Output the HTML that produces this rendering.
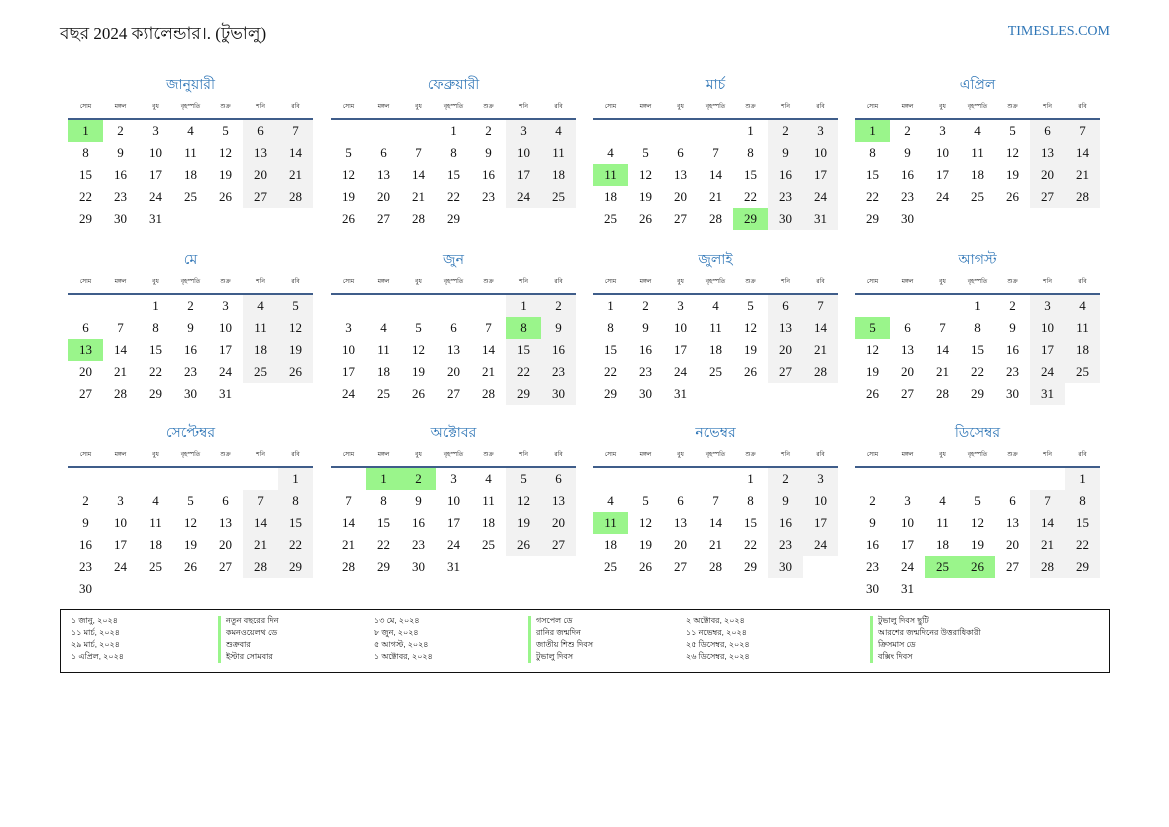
<!DOCTYPE html>
<html><head><meta charset="utf-8"><style>
*{margin:0;padding:0;box-sizing:border-box}
body{width:1169px;height:827px;background:#fff;position:relative;font-family:"Liberation Serif",serif;color:#111;overflow:hidden}
.t{position:absolute;left:60px;top:21px;font-size:17px}
.s{position:absolute;right:59px;top:24px;font-size:14px;color:#2e75b6}
.m{position:absolute;width:245px}
.m h3{font-weight:normal;color:#2e75b6;font-size:14px;text-align:center;height:23px;line-height:26px}
.m .wd{display:flex;height:24px;border-bottom:2px solid #3f5d8a;font-size:6px;align-items:flex-end;padding-bottom:6px}
.m .wd span{width:35px;text-align:center}
table{border-collapse:collapse;table-layout:fixed}
td{width:35px;height:22px;text-align:center;font-size:13px;padding:0;vertical-align:middle}
td:nth-child(n+6):not(:empty){background:#f2f2f2}
td.h{background:#9af58b!important}
.lg{position:absolute;left:60px;top:609px;width:1050px;height:64px;border:1.5px solid #111;font-size:8px;font-family:"Liberation Sans",sans-serif}
.lc{position:absolute;top:5px;line-height:12px}
.lb{position:absolute;top:6px;width:3px;height:47px;background:#9af58b}
</style></head><body>
<div class="t">বছর 2024 ক্যালেন্ডার।. (টুভালু)</div>
<div class="s">TIMESLES.COM</div>

<div class="m" style="left:68px;top:73px"><h3>জানুয়ারী</h3><div class="wd"><span>সোম</span><span>মঙ্গল</span><span>বুধ</span><span>বৃহস্পতি</span><span>শুক্র</span><span>শনি</span><span>রবি</span></div>
<table><tr><td class="h">1</td><td>2</td><td>3</td><td>4</td><td>5</td><td>6</td><td>7</td></tr><tr><td>8</td><td>9</td><td>10</td><td>11</td><td>12</td><td>13</td><td>14</td></tr><tr><td>15</td><td>16</td><td>17</td><td>18</td><td>19</td><td>20</td><td>21</td></tr><tr><td>22</td><td>23</td><td>24</td><td>25</td><td>26</td><td>27</td><td>28</td></tr><tr><td>29</td><td>30</td><td>31</td><td></td><td></td><td></td><td></td></tr></table></div>

<div class="m" style="left:331px;top:73px"><h3>ফেব্রুয়ারী</h3><div class="wd"><span>সোম</span><span>মঙ্গল</span><span>বুধ</span><span>বৃহস্পতি</span><span>শুক্র</span><span>শনি</span><span>রবি</span></div>
<table><tr><td></td><td></td><td></td><td>1</td><td>2</td><td>3</td><td>4</td></tr><tr><td>5</td><td>6</td><td>7</td><td>8</td><td>9</td><td>10</td><td>11</td></tr><tr><td>12</td><td>13</td><td>14</td><td>15</td><td>16</td><td>17</td><td>18</td></tr><tr><td>19</td><td>20</td><td>21</td><td>22</td><td>23</td><td>24</td><td>25</td></tr><tr><td>26</td><td>27</td><td>28</td><td>29</td><td></td><td></td><td></td></tr></table></div>

<div class="m" style="left:593px;top:73px"><h3>মার্চ</h3><div class="wd"><span>সোম</span><span>মঙ্গল</span><span>বুধ</span><span>বৃহস্পতি</span><span>শুক্র</span><span>শনি</span><span>রবি</span></div>
<table><tr><td></td><td></td><td></td><td></td><td>1</td><td>2</td><td>3</td></tr><tr><td>4</td><td>5</td><td>6</td><td>7</td><td>8</td><td>9</td><td>10</td></tr><tr><td class="h">11</td><td>12</td><td>13</td><td>14</td><td>15</td><td>16</td><td>17</td></tr><tr><td>18</td><td>19</td><td>20</td><td>21</td><td>22</td><td>23</td><td>24</td></tr><tr><td>25</td><td>26</td><td>27</td><td>28</td><td class="h">29</td><td>30</td><td>31</td></tr></table></div>

<div class="m" style="left:855px;top:73px"><h3>এপ্রিল</h3><div class="wd"><span>সোম</span><span>মঙ্গল</span><span>বুধ</span><span>বৃহস্পতি</span><span>শুক্র</span><span>শনি</span><span>রবি</span></div>
<table><tr><td class="h">1</td><td>2</td><td>3</td><td>4</td><td>5</td><td>6</td><td>7</td></tr><tr><td>8</td><td>9</td><td>10</td><td>11</td><td>12</td><td>13</td><td>14</td></tr><tr><td>15</td><td>16</td><td>17</td><td>18</td><td>19</td><td>20</td><td>21</td></tr><tr><td>22</td><td>23</td><td>24</td><td>25</td><td>26</td><td>27</td><td>28</td></tr><tr><td>29</td><td>30</td><td></td><td></td><td></td><td></td><td></td></tr></table></div>

<div class="m" style="left:68px;top:248px"><h3>মে</h3><div class="wd"><span>সোম</span><span>মঙ্গল</span><span>বুধ</span><span>বৃহস্পতি</span><span>শুক্র</span><span>শনি</span><span>রবি</span></div>
<table><tr><td></td><td></td><td>1</td><td>2</td><td>3</td><td>4</td><td>5</td></tr><tr><td>6</td><td>7</td><td>8</td><td>9</td><td>10</td><td>11</td><td>12</td></tr><tr><td class="h">13</td><td>14</td><td>15</td><td>16</td><td>17</td><td>18</td><td>19</td></tr><tr><td>20</td><td>21</td><td>22</td><td>23</td><td>24</td><td>25</td><td>26</td></tr><tr><td>27</td><td>28</td><td>29</td><td>30</td><td>31</td><td></td><td></td></tr></table></div>

<div class="m" style="left:331px;top:248px"><h3>জুন</h3><div class="wd"><span>সোম</span><span>মঙ্গল</span><span>বুধ</span><span>বৃহস্পতি</span><span>শুক্র</span><span>শনি</span><span>রবি</span></div>
<table><tr><td></td><td></td><td></td><td></td><td></td><td>1</td><td>2</td></tr><tr><td>3</td><td>4</td><td>5</td><td>6</td><td>7</td><td class="h">8</td><td>9</td></tr><tr><td>10</td><td>11</td><td>12</td><td>13</td><td>14</td><td>15</td><td>16</td></tr><tr><td>17</td><td>18</td><td>19</td><td>20</td><td>21</td><td>22</td><td>23</td></tr><tr><td>24</td><td>25</td><td>26</td><td>27</td><td>28</td><td>29</td><td>30</td></tr></table></div>

<div class="m" style="left:593px;top:248px"><h3>জুলাই</h3><div class="wd"><span>সোম</span><span>মঙ্গল</span><span>বুধ</span><span>বৃহস্পতি</span><span>শুক্র</span><span>শনি</span><span>রবি</span></div>
<table><tr><td>1</td><td>2</td><td>3</td><td>4</td><td>5</td><td>6</td><td>7</td></tr><tr><td>8</td><td>9</td><td>10</td><td>11</td><td>12</td><td>13</td><td>14</td></tr><tr><td>15</td><td>16</td><td>17</td><td>18</td><td>19</td><td>20</td><td>21</td></tr><tr><td>22</td><td>23</td><td>24</td><td>25</td><td>26</td><td>27</td><td>28</td></tr><tr><td>29</td><td>30</td><td>31</td><td></td><td></td><td></td><td></td></tr></table></div>

<div class="m" style="left:855px;top:248px"><h3>আগস্ট</h3><div class="wd"><span>সোম</span><span>মঙ্গল</span><span>বুধ</span><span>বৃহস্পতি</span><span>শুক্র</span><span>শনি</span><span>রবি</span></div>
<table><tr><td></td><td></td><td></td><td>1</td><td>2</td><td>3</td><td>4</td></tr><tr><td class="h">5</td><td>6</td><td>7</td><td>8</td><td>9</td><td>10</td><td>11</td></tr><tr><td>12</td><td>13</td><td>14</td><td>15</td><td>16</td><td>17</td><td>18</td></tr><tr><td>19</td><td>20</td><td>21</td><td>22</td><td>23</td><td>24</td><td>25</td></tr><tr><td>26</td><td>27</td><td>28</td><td>29</td><td>30</td><td>31</td><td></td></tr></table></div>

<div class="m" style="left:68px;top:421px"><h3>সেপ্টেম্বর</h3><div class="wd"><span>সোম</span><span>মঙ্গল</span><span>বুধ</span><span>বৃহস্পতি</span><span>শুক্র</span><span>শনি</span><span>রবি</span></div>
<table><tr><td></td><td></td><td></td><td></td><td></td><td></td><td>1</td></tr><tr><td>2</td><td>3</td><td>4</td><td>5</td><td>6</td><td>7</td><td>8</td></tr><tr><td>9</td><td>10</td><td>11</td><td>12</td><td>13</td><td>14</td><td>15</td></tr><tr><td>16</td><td>17</td><td>18</td><td>19</td><td>20</td><td>21</td><td>22</td></tr><tr><td>23</td><td>24</td><td>25</td><td>26</td><td>27</td><td>28</td><td>29</td></tr><tr><td>30</td><td></td><td></td><td></td><td></td><td></td><td></td></tr></table></div>

<div class="m" style="left:331px;top:421px"><h3>অক্টোবর</h3><div class="wd"><span>সোম</span><span>মঙ্গল</span><span>বুধ</span><span>বৃহস্পতি</span><span>শুক্র</span><span>শনি</span><span>রবি</span></div>
<table><tr><td></td><td class="h">1</td><td class="h">2</td><td>3</td><td>4</td><td>5</td><td>6</td></tr><tr><td>7</td><td>8</td><td>9</td><td>10</td><td>11</td><td>12</td><td>13</td></tr><tr><td>14</td><td>15</td><td>16</td><td>17</td><td>18</td><td>19</td><td>20</td></tr><tr><td>21</td><td>22</td><td>23</td><td>24</td><td>25</td><td>26</td><td>27</td></tr><tr><td>28</td><td>29</td><td>30</td><td>31</td><td></td><td></td><td></td></tr></table></div>

<div class="m" style="left:593px;top:421px"><h3>নভেম্বর</h3><div class="wd"><span>সোম</span><span>মঙ্গল</span><span>বুধ</span><span>বৃহস্পতি</span><span>শুক্র</span><span>শনি</span><span>রবি</span></div>
<table><tr><td></td><td></td><td></td><td></td><td>1</td><td>2</td><td>3</td></tr><tr><td>4</td><td>5</td><td>6</td><td>7</td><td>8</td><td>9</td><td>10</td></tr><tr><td class="h">11</td><td>12</td><td>13</td><td>14</td><td>15</td><td>16</td><td>17</td></tr><tr><td>18</td><td>19</td><td>20</td><td>21</td><td>22</td><td>23</td><td>24</td></tr><tr><td>25</td><td>26</td><td>27</td><td>28</td><td>29</td><td>30</td><td></td></tr></table></div>

<div class="m" style="left:855px;top:421px"><h3>ডিসেম্বর</h3><div class="wd"><span>সোম</span><span>মঙ্গল</span><span>বুধ</span><span>বৃহস্পতি</span><span>শুক্র</span><span>শনি</span><span>রবি</span></div>
<table><tr><td></td><td></td><td></td><td></td><td></td><td></td><td>1</td></tr><tr><td>2</td><td>3</td><td>4</td><td>5</td><td>6</td><td>7</td><td>8</td></tr><tr><td>9</td><td>10</td><td>11</td><td>12</td><td>13</td><td>14</td><td>15</td></tr><tr><td>16</td><td>17</td><td>18</td><td>19</td><td>20</td><td>21</td><td>22</td></tr><tr><td>23</td><td>24</td><td class="h">25</td><td class="h">26</td><td>27</td><td>28</td><td>29</td></tr><tr><td>30</td><td>31</td><td></td><td></td><td></td><td></td><td></td></tr></table></div>

<div class="lg">
<div class="lc" style="left:10px">১ জানু, ২০২৪<br>১১ মার্চ, ২০২৪<br>২৯ মার্চ, ২০২৪<br>১ এপ্রিল, ২০২৪</div>
<div class="lb" style="left:157px"></div>
<div class="lc" style="left:165px">নতুন বছরের দিন<br>কমনওয়েলথ ডে<br>শুক্রবার<br>ইস্টার সোমবার</div>
<div class="lc" style="left:313px">১৩ মে, ২০২৪<br>৮ জুন, ২০২৪<br>৫ আগস্ট, ২০২৪<br>১ অক্টোবর, ২০২৪</div>
<div class="lb" style="left:467px"></div>
<div class="lc" style="left:475px">গসপেল ডে<br>রানির জন্মদিন<br>জাতীয় শিশু দিবস<br>টুভালু দিবস</div>
<div class="lc" style="left:625px">২ অক্টোবর, ২০২৪<br>১১ নভেম্বর, ২০২৪<br>২৫ ডিসেম্বর, ২০২৪<br>২৬ ডিসেম্বর, ২০২৪</div>
<div class="lb" style="left:809px"></div>
<div class="lc" style="left:817px">টুভালু দিবস ছুটি<br>আরশের জন্মদিনের উত্তরাধিকারী<br>ক্রিসমাস ডে<br>বক্সিং দিবস</div>
</div>
</body></html>
